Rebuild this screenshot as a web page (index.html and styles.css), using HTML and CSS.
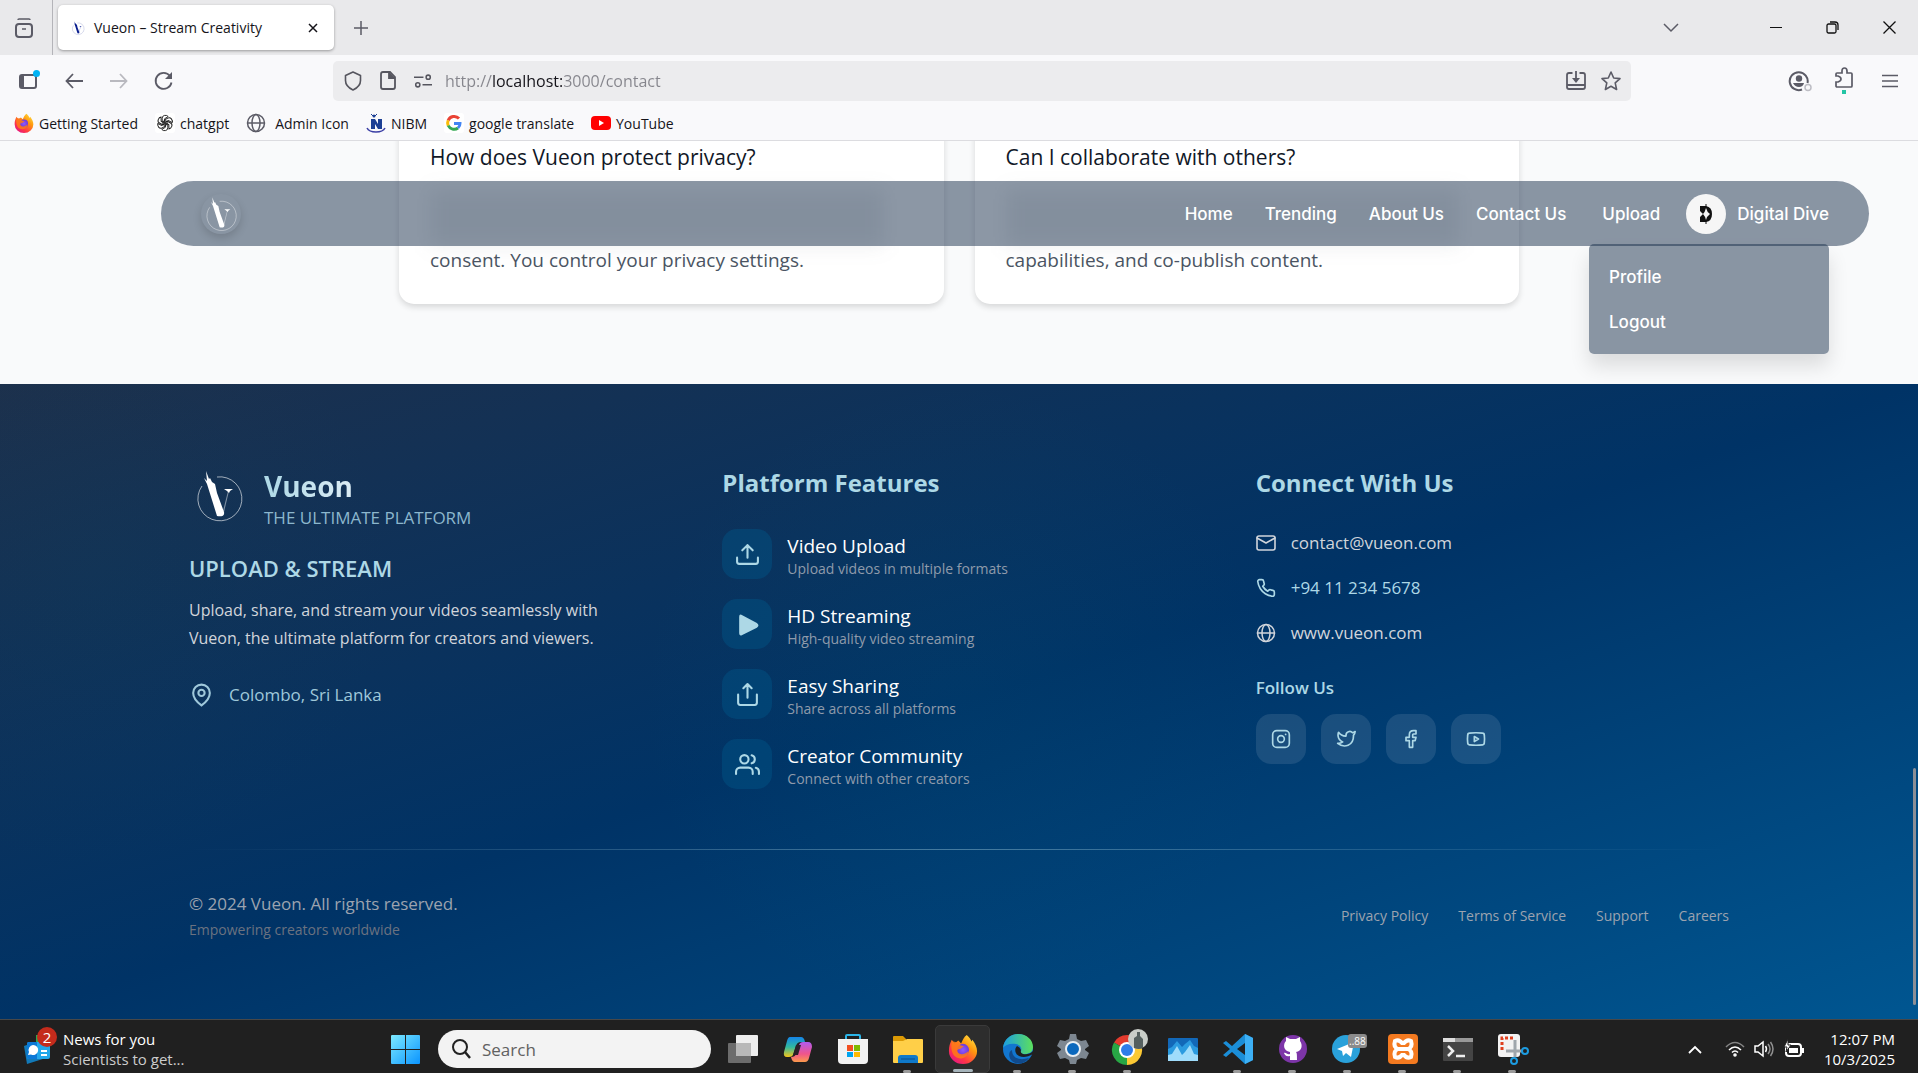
FILE: index.html
```html
<!DOCTYPE html>
<html lang="en">
<head>
<meta charset="utf-8">
<meta name="viewport" content="width=device-width, initial-scale=1">
<title>Vueon – Stream Creativity</title>
<link rel="stylesheet" href="styles.css">
</head>
<body>
<svg class="sprite" aria-hidden="true">
  <symbol id="logo" viewBox="0 0 60 60">
    <path d="M28 11a22 22 0 1 1-15 9" fill="none" stroke="currentColor" stroke-width="1" opacity=".6"/>
    <path d="M17 5l3 8 1-1 2 4 3 2 2 9 7 19c1 4-3 5-7 4L18 18l-3-6 3 3z" fill="currentColor"/>
    <path d="M40 25l-5 21-1-1 5-20z" fill="currentColor" opacity=".45"/>
    <path d="M35 23h9l-3 2-1 2-2-2z" fill="currentColor"/>
  </symbol>
  <symbol id="firefox" viewBox="0 0 32 32">
    <defs>
      <linearGradient id="ffa" x1="1" y1="0" x2=".2" y2="1"><stop offset="0" stop-color="#fff44f"/><stop offset=".4" stop-color="#ff980e"/><stop offset=".75" stop-color="#ff3647"/><stop offset="1" stop-color="#e31587"/></linearGradient>
      <radialGradient id="ffb"><stop offset="0" stop-color="#9059ff"/><stop offset="1" stop-color="#6e3ad6"/></radialGradient>
    </defs>
    <path d="M20 1c3 3 4 4 5 7l1-2c3 4 5 8 5 12a15 14 0 0 1-30 0c0-5 1-8 3-12l3 4 4-3 3 3c2-4 3-7 6-9z" fill="url(#ffa)"/>
    <circle cx="16" cy="17" r="6.500" fill="url(#ffb)"/>
    <path d="M4 8c4 0 8 1 9 4l4 1-4 3c-3 0-4 2-2 4 3 3 8 1 11-2-1 6-5 8-9 8-6 0-11-6-9-18z" fill="#ff7a18" opacity=".85"/>
  </symbol>
  <symbol id="globe" viewBox="0 0 20 20">
    <g fill="none" stroke="currentColor" stroke-width="1.5"><circle cx="10" cy="10" r="8.5"/><ellipse cx="10" cy="10" rx="4" ry="8.5"/><path d="M1.5 10h17"/></g>
  </symbol>
</svg>

<header class="chrome">
  <div class="tabstrip">
    <button class="icon-btn recent" aria-label="Recent tabs"><svg width="20" height="22" viewBox="0 0 20 22" fill="none" stroke="currentColor" stroke-width="2"><rect x="2" y="7" width="16" height="13" rx="3"/><path d="M4 3q0-1 1-1h10q1 0 1 1M8 12h4" stroke-width="1.5"/></svg></button>
    <div class="tab">
      <svg class="favicon" width="16" height="16"><use href="#logo"/></svg>
      <span class="tab-title">Vueon – Stream Creativity</span>
      <button class="tab-close" aria-label="Close tab"><svg width="10" height="10" viewBox="0 0 10 10" stroke="currentColor" stroke-width="1.5"><path d="M1 1l8 8M9 1l-8 8"/></svg></button>
    </div>
    <button class="icon-btn newtab" aria-label="New tab"><svg width="16" height="16" viewBox="0 0 16 16" stroke="currentColor" stroke-width="1.5"><path d="M8 1v14M1 8h14"/></svg></button>
    <div class="window-controls">
      <button class="icon-btn alltabs" aria-label="List all tabs"><svg width="16" height="10" viewBox="0 0 16 10" fill="none" stroke="currentColor" stroke-width="1.5"><path d="M1 1l7 7 7-7"/></svg></button>
      <button class="icon-btn win" aria-label="Minimize"><svg width="12" height="12" viewBox="0 0 12 12" stroke="currentColor"><path d="M0 5.5h12"/></svg></button>
      <button class="icon-btn win" aria-label="Restore"><svg width="13" height="13" viewBox="0 0 13 13" fill="none" stroke="currentColor" stroke-width="1.3"><rect x="1" y="3" width="9" height="9" rx="1.5"/><path d="M4 1h5q3 0 3 3v5"/></svg></button>
      <button class="icon-btn win" aria-label="Close"><svg width="13" height="13" viewBox="0 0 13 13" stroke="currentColor" stroke-width="1.3"><path d="M.5.5l12 12M12.500.5l-12 12"/></svg></button>
    </div>
  </div>

  <div class="toolbar">
    <div class="nav-buttons">
      <button class="icon-btn sidebar-btn" aria-label="Sidebar"><svg width="22" height="22" viewBox="0 0 22 22"><rect x="2" y="5" width="16" height="13" rx="2" fill="none" stroke="currentColor" stroke-width="2"/><path d="M2 5h4v13H2z" fill="currentColor"/><circle cx="18.500" cy="3.500" r="3.500" fill="#00b3f4"/></svg></button>
      <button class="icon-btn" aria-label="Back"><svg width="18" height="16" viewBox="0 0 18 16" fill="none" stroke="currentColor" stroke-width="1.8"><path d="M18 8H2M8 1L1.500 8 8 15"/></svg></button>
      <button class="icon-btn dim" aria-label="Forward"><svg width="18" height="16" viewBox="0 0 18 16" fill="none" stroke="currentColor" stroke-width="1.8"><path d="M0 8h16M10 1l6.500 7-6.500 7"/></svg></button>
      <button class="icon-btn" aria-label="Reload"><svg width="20" height="20" viewBox="0 0 20 20" fill="none" stroke="currentColor" stroke-width="1.8"><path d="M17.500 11.500A8 8 0 1 1 16 5"/><path d="M18 1v7h-7z" fill="currentColor" stroke="none"/></svg></button>
    </div>
    <div class="urlbar">
      <svg width="18" height="20" viewBox="0 0 18 20" fill="none" stroke="currentColor" stroke-width="1.6"><path d="M9 1l7.500 3.500v5q0 6-7.500 9.500-7.500-3.500-7.500-9.500v-5z" stroke-linejoin="round"/></svg>
      <svg width="16" height="19" viewBox="0 0 16 19" fill="none" stroke="currentColor" stroke-width="1.8"><path d="M3 1h7l5 5v10q0 2-2 2H3q-2 0-2-2V3q0-2 2-2z"/><path d="M9 1v6h6" fill="currentColor"/></svg>
      <svg width="19" height="14" viewBox="0 0 19 14" fill="none" stroke="currentColor" stroke-width="1.6"><path d="M0 3h10M9 11h10"/><circle cx="15" cy="3" r="2.200"/><circle cx="4" cy="11" r="2.200"/></svg>
      <input class="url" type="text" value="http://localhost:3000/contact" aria-label="Address">
      <button class="icon-btn url-act" aria-label="Install"><svg width="20" height="20" viewBox="0 0 20 20" fill="none" stroke="currentColor" stroke-width="1.8"><path d="M6.500 2H3Q1 2 1 4v12q0 2 2 2h14q2 0 2-2V4q0-2-2-2h-3.500M1 14h18M10 0v9"/><path d="M6 7h8l-4 5z" fill="currentColor" stroke="none"/></svg></button>
      <button class="icon-btn url-act" aria-label="Bookmark"><svg width="20" height="20" viewBox="0 0 20 20" fill="none" stroke="currentColor" stroke-width="1.6" stroke-linejoin="round"><path d="M10 1l2.700 6 6.300.6-4.800 4.300 1.400 6.600L10 15.200l-5.600 3.300 1.400-6.600L1 7.600 7.300 7z"/></svg></button>
    </div>
    <div class="ext-buttons">
      <button class="icon-btn" aria-label="Account"><svg width="24" height="22" viewBox="0 0 24 22"><path d="M19.500 13A9 9 0 1 0 14 19.500" fill="none" stroke="currentColor" stroke-width="2"/><circle cx="11" cy="8.500" r="3.200" fill="currentColor"/><path d="M5 13h11q-1 4-5 4t-6-4z" fill="currentColor"/><circle cx="20" cy="17.500" r="3" fill="none" stroke="#bdbdc4" stroke-width="1.500"/></svg></button>
      <button class="icon-btn" aria-label="Extensions"><svg width="20" height="28" viewBox="0 0 20 28"><path d="M2 20q-1 0-1-1v-4h2q3-1 3-3t-3-3H1V7q0-1 1-1h5V4q0-3 2.500-3T12 4v2h4q1 0 1 1v12q0 1-1 1z" fill="none" stroke="currentColor" stroke-width="1.700"/><path d="M7 23h4v4H7z" fill="#24c5a5"/></svg></button>
      <button class="icon-btn" aria-label="Menu"><svg width="16" height="14" viewBox="0 0 16 14" stroke="currentColor" stroke-width="1.500"><path d="M0 1.500h16M0 7h16M0 12.500h16"/></svg></button>
    </div>
  </div>

  <nav class="bookmarks" aria-label="Bookmarks">
    <a href="#"><svg width="20" height="20"><use href="#firefox"/></svg>Getting Started</a>
    <a href="#"><svg width="20" height="20" viewBox="0 0 20 20"><rect width="20" height="20" rx="3" fill="#fff"/><g fill="none" stroke="#222" stroke-width="1.200" transform="translate(2 2) scale(.8)"><path id="petal" d="M10 7L6.500 9V4q0-3 3-3.500 3-.5 4.500 1.500L9.500 4.700V10"/><use href="#petal" transform="rotate(60 10 10)"/><use href="#petal" transform="rotate(120 10 10)"/><use href="#petal" transform="rotate(180 10 10)"/><use href="#petal" transform="rotate(240 10 10)"/><use href="#petal" transform="rotate(300 10 10)"/></g></svg>chatgpt</a>
    <a href="#" class="wide"><svg width="20" height="20" class="grey"><use href="#globe"/></svg>Admin Icon</a>
    <a href="#"><svg width="20" height="20" viewBox="0 0 20 20"><path d="M5 16V6h4l3 5V6h4v10h-4l-3-5v5z" fill="#1c3f94"/><circle cx="8" cy="3" r="1.500" fill="#1c3f94"/><path d="M5 1l3 3 3-3" fill="none" stroke="#1c3f94"/><path d="M1 15q2 4 9 4t9-4" fill="none" stroke="#3b3fa5" stroke-width="1.500"/></svg>NIBM</a>
    <a href="#"><svg width="20" height="20" viewBox="0 0 20 20" fill="none" stroke-width="3"><rect width="20" height="20" rx="3" fill="#fff"/><path d="M15 5.500A6.500 6.500 0 0 0 4.200 7.500" stroke="#ea4335"/><path d="M4.200 7.300a6.500 6.500 0 0 0 0 5.400" stroke="#fbbc05"/><path d="M4.200 12.500A6.500 6.500 0 0 0 14 15" stroke="#34a853"/><path d="M14 15a6 6 0 0 0 2-4.600h-6" stroke="#4285f4"/></svg>google translate</a>
    <a href="#"><svg width="20" height="20" viewBox="0 0 20 20"><rect y="3" width="20" height="14" rx="4" fill="#f00"/><path d="M8 7l5 3-5 3z" fill="#fff"/></svg>YouTube</a>
  </nav>
</header>

<main class="page">
  <nav class="site-nav">
    <a class="nav-logo" href="#" aria-label="Vueon"><svg width="40" height="40"><use href="#logo"/></svg></a>
    <div class="nav-links">
      <a href="#">Home</a><a href="#">Trending</a><a href="#">About Us</a><a href="#">Contact Us</a>
    </div>
    <a class="upload" href="#">Upload</a>
    <button class="account">
      <span class="avatar"><svg width="14" height="20" viewBox="0 0 14 20"><path fill-rule="evenodd" d="M1 2h6q6 1 6 8t-6 8H1v-5l3-3-3-3zm6 2q-1 4-3 6 2 2 3 6 1-4 4-6-3-2-4-6z" fill="#111"/><path d="M7 0v4M7 16v4" stroke="#111"/></svg></span>
      Digital Dive
    </button>
  </nav>
  <div class="dropdown">
    <a href="#">Profile</a>
    <button>Logout</button>
  </div>

  <section class="faq">
    <article class="card">
      <h3>How does Vueon protect privacy?</h3>
      <div class="veil"></div>
      <p>consent. You control your privacy settings.</p>
    </article>
    <article class="card">
      <h3>Can I collaborate with others?</h3>
      <div class="veil"></div>
      <p>capabilities, and co-publish content.</p>
    </article>
  </section>

  <footer class="footer">
    <div class="footer-grid">
      <section>
        <div class="brand">
          <svg width="60" height="60"><use href="#logo"/></svg>
          <div><h2>Vueon</h2><p>THE ULTIMATE PLATFORM</p></div>
        </div>
        <h3 class="slogan">UPLOAD &amp; STREAM</h3>
        <p class="about">Upload, share, and stream your videos seamlessly with<br>Vueon, the ultimate platform for creators and viewers.</p>
        <p class="location"><svg width="25" height="26" viewBox="0 0 24 24" fill="none" stroke="currentColor" stroke-width="2"><path d="M12 22q-8-6-8-12a8 8 0 0 1 16 0q0 6-8 12z"/><circle cx="12" cy="10" r="3"/></svg>Colombo, Sri Lanka</p>
      </section>

      <section>
        <h3 class="col-title">Platform Features</h3>
        <ul class="features">
          <li><span class="tile"><svg width="25" height="25" viewBox="0 0 24 24"><path d="M2 15v4q0 2 2 2h16q2 0 2-2v-4M12 15V3M7 8l5-5 5 5"/></svg></span><div><h4>Video Upload</h4><p>Upload videos in multiple formats</p></div></li>
          <li><span class="tile"><svg width="25" height="25" viewBox="0 0 24 24"><path d="M4 4.500v16q0 3 3 1.500l14-7q3-2 0-4.500L7 3Q4 1.500 4 4.500z" class="solid"/></svg></span><div><h4>HD Streaming</h4><p>High-quality video streaming</p></div></li>
          <li><span class="tile"><svg width="25" height="25" viewBox="0 0 24 24"><path d="M3 12v8q0 2 2 2h14q2 0 2-2v-8M12 15V2M8 6l4-4 4 4"/></svg></span><div><h4>Easy Sharing</h4><p>Share across all platforms</p></div></li>
          <li><span class="tile"><svg width="25" height="25" viewBox="0 0 24 24"><path d="M17 21v-2a4 4 0 0 0-4-4H5a4 4 0 0 0-4 4v2M23 21v-2a4 4 0 0 0-3-3.870M16 3.130a4 4 0 0 1 0 7.750"/><circle cx="9" cy="7" r="4"/></svg></span><div><h4>Creator Community</h4><p>Connect with other creators</p></div></li>
        </ul>
      </section>

      <section>
        <h3 class="col-title">Connect With Us</h3>
        <ul class="contacts">
          <li><a href="#"><svg width="20" height="20" viewBox="0 0 20 20"><rect x="1" y="3" width="18" height="14" rx="2"/><path d="M1 5l9 5 9-5"/></svg>contact@vueon.com</a></li>
          <li class="tint"><svg width="20" height="20" viewBox="0 0 24 24"><path stroke-width="2" d="M22 16.920v3a2 2 0 0 1-2.180 2 19.800 19.800 0 0 1-8.630-3.070 19.500 19.500 0 0 1-6-6 19.800 19.800 0 0 1-3.070-8.670A2 2 0 0 1 4.110 2h3a2 2 0 0 1 2 1.720c.13.960.36 1.900.7 2.810a2 2 0 0 1-.45 2.110L8.090 9.910a16 16 0 0 0 6 6l1.270-1.270a2 2 0 0 1 2.110-.45c.91.340 1.850.57 2.810.7A2 2 0 0 1 22 16.920z"/></svg>+94 11 234 5678</li>
          <li><a href="#"><svg width="20" height="20"><use href="#globe"/></svg>www.vueon.com</a></li>
        </ul>
        <h4 class="follow">Follow Us</h4>
        <div class="socials">
          <a href="#" aria-label="Instagram"><svg width="20" height="20" viewBox="0 0 24 24"><rect x="2" y="2" width="20" height="20" rx="5"/><circle cx="12" cy="12" r="4"/><path d="M17.500 6.500h.1"/></svg></a>
          <a href="#" aria-label="Twitter"><svg width="20" height="20" viewBox="0 0 24 24"><path d="M23 3a10.900 10.900 0 0 1-3.140 1.530 4.480 4.480 0 0 0-7.860 3v1A10.660 10.660 0 0 1 3 4s-3 8 5 11.500c-2 1.700-4 2-6 1.800C10 23.500 21 20 21 8.500a4.500 4.500 0 0 0-.08-.83A7.720 7.720 0 0 0 23 3z"/></svg></a>
          <a href="#" aria-label="Facebook"><svg width="20" height="20" viewBox="0 0 24 24"><path d="M18 2h-3q-5 0-5 5v3H6v4h4v8h4v-8h3l1-4h-4V7q0-1 1-1h3z"/></svg></a>
          <a href="#" aria-label="YouTube"><svg width="20" height="20" viewBox="0 0 24 24"><path d="M4 5q8-1 16 0 2 0 2 3 .5 4 0 8 0 3-2 3-8 1-16 0-2 0-2-3-.5-4 0-8 0-3 2-3z"/><path d="M10 9l5 3-5 3z"/></svg></a>
        </div>
      </section>
    </div>
    <hr>
    <div class="footer-bottom">
      <div><p class="copy">© 2024 Vueon. All rights reserved.</p><p class="tagline">Empowering creators worldwide</p></div>
      <nav class="legal"><a href="#">Privacy Policy</a><a href="#">Terms of Service</a><a href="#">Support</a><a href="#">Careers</a></nav>
    </div>
  </footer>
  <div class="scroll-thumb"></div>
</main>

<div class="taskbar">
  <button class="widget">
    <span class="news-icon"><svg width="28" height="32" viewBox="0 0 28 32"><path d="M12 2h10v12H12z" fill="#2fa84f"/><path d="M3 31l-3-18 8-3 14 15z" fill="#1279b8"/><rect x="3" y="9" width="23" height="17" rx="2" fill="#22a7ea"/><path d="M3 11q0-2 2-2h8v17H5q-2 0-2-2z" fill="#0a78d6"/><path d="M9 12a5 5 0 1 1-2 9.500L4 22l1-3a5 5 0 0 1 4-7z" fill="#fff"/><path d="M17 18h6M17 22h6" stroke="#fff" stroke-width="2"/></svg><span class="badge">2</span></span>
    <span class="news"><b>News for you</b><span>Scientists to get...</span></span>
  </button>

  <div class="apps">
    <button class="start" aria-label="Start"><svg width="29" height="29" viewBox="0 0 29 29"><defs><linearGradient id="wn" gradientUnits="userSpaceOnUse" x1="0" y1="0" x2="29" y2="29"><stop offset="0" stop-color="#7deaff"/><stop offset="1" stop-color="#0a94ff"/></linearGradient></defs><path d="M0 1q0-1 1-1h13v14H0zM15 0h13q1 0 1 1v13H15zM0 15h14v14H1q-1 0-1-1zM15 15h14v13q0 1-1 1H15z" fill="url(#wn)"/></svg></button>
    <label class="search"><svg width="20" height="20" viewBox="0 0 20 20" fill="none" stroke="#222" stroke-width="2"><circle cx="9" cy="8" r="7"/><path d="M14 13l5 6" stroke-width="2.500"/></svg><input type="search" placeholder="Search" aria-label="Search"></label>
    <div class="slots">
      <button aria-label="Task view"><svg width="32" height="32" viewBox="0 0 32 32"><rect x="9" y="2" width="22" height="21" rx="1" fill="#eee"/><rect x="1" y="10" width="23" height="20" rx="1" fill="#6c6c6c"/><path d="M9 10h15v13H9z" fill="#b8b8b8"/></svg></button>
      <button aria-label="Copilot"><svg width="32" height="32" viewBox="0 0 32 32"><defs><linearGradient id="cpa" x1="0" y1="0" x2="0" y2="1"><stop offset="0" stop-color="#1584e8"/><stop offset=".5" stop-color="#30b9a0"/><stop offset="1" stop-color="#f5c518"/></linearGradient><linearGradient id="cpb" x1="0" y1="0" x2="0" y2="1"><stop offset="0" stop-color="#b15bf0"/><stop offset=".6" stop-color="#f0558a"/><stop offset="1" stop-color="#fb9a4b"/></linearGradient></defs><path d="M8 4h11q3 0 4 5h-4q-4 0-5 4l-3 9q-1 2-4 2H5q-4 0-3-5l3-11q1-4 3-4z" fill="url(#cpa)"/><path d="M23 29H13q-3 0-4-5 4 0 5-3l3-9q1-3 4-3h5q4 0 4 5l-3 11q-1 4-4 4z" fill="url(#cpb)"/><path d="M14 12h5l-3 10h-5z" fill="#2a2028"/></svg></button>
      <button aria-label="Store"><svg width="32" height="32" viewBox="0 0 32 32"><path d="M9 9V3q0-1 1-1h12q1 0 1 1v6" fill="none" stroke="#2bb5e8" stroke-width="2"/><path d="M1 6h30v21q0 4-4 4H5q-4 0-4-4z" fill="#f2f2f2"/><path d="M10 12h6v6h-6z" fill="#f25022"/><path d="M17 12h6v6h-6z" fill="#7fba00"/><path d="M10 19h6v5h-6z" fill="#00a4ef"/><path d="M17 19h6v5h-6z" fill="#ffb900"/></svg></button>
      <button class="open" aria-label="File Explorer"><svg width="32" height="32" viewBox="0 0 32 32"><path d="M1 4q0-1 1-1h9l3 3v6H1z" fill="#dc9a05"/><path d="M1 8h10l4-2h15q1 0 1 1v22q0 1-1 1H2q-1 0-1-1z" fill="#ffcf48"/><path d="M6 30v-5q0-3 3-3h14q3 0 3 3v5z" fill="#0f79c9"/><path d="M9 26h14" stroke="#0a4f8a"/></svg></button>
      <button class="open active" aria-label="Firefox"><svg width="30" height="30"><use href="#firefox"/></svg></button>
      <button class="open" aria-label="Edge"><svg width="32" height="32" viewBox="0 0 32 32"><defs><linearGradient id="eg" x1="0" x2="1"><stop offset="0" stop-color="#1b9de2"/><stop offset="1" stop-color="#5de05c"/></linearGradient></defs><circle cx="16" cy="16" r="15" fill="#1276cf"/><path d="M1 15C2 6 9 1 16 1c9 0 15 6 15 13 0 5-4 7-8 7-4 0-5-1-4-3s0-6-5-7C8 10 3 12 1 15z" fill="url(#eg)"/><path d="M10 17c0 8 7 11 17 8-4 6-13 8-18 2-3-4-2-9 1-10z" fill="#114a8b"/><path d="M15 13c-3 3-2 8 2 10 4 2 9 1 14-2V18q-4 4-10 3-3-1-2-4-1-3-4-4z" fill="#202020"/></svg></button>
      <button class="open" aria-label="Settings"><svg width="32" height="32" viewBox="0 0 32 32"><path d="M13 1h6l1 5 4 2 5-1 3 6-4 3v1l4 3-3 6-5-1-4 2-1 4h-6l-1-4-4-2-5 1-3-6 4-3v-1l-4-3 3-6 5 1 4-2z" fill="#7d8791"/><circle cx="16" cy="16" r="7" fill="#0b68bd" stroke="#e9eef2" stroke-width="2"/></svg></button>
      <button class="open" aria-label="Chrome"><svg width="40" height="40" viewBox="0 0 40 40"><path d="M19 21L6 13.500A15 15 0 0 1 32 13.500z" fill="#e33b2e"/><path d="M19 21v15A15 15 0 0 1 6 13.500z" fill="#28a745"/><path d="M19 21l13-7.500A15 15 0 0 1 19 36z" fill="#fcc934"/><circle cx="19" cy="21" r="8" fill="#fff"/><circle cx="19" cy="21" r="6" fill="#2f7de9"/><circle cx="30" cy="10" r="10" fill="#c9cdc8"/><path d="M26 19V9l3-2V3h3v4l3 3v9q-4 2-9 0z" fill="#55605f"/></svg></button>
      <button aria-label="Task Manager"><svg width="32" height="32" viewBox="0 0 32 32"><rect x="1" y="5" width="30" height="23" rx="1" fill="#1268b8"/><path d="M1 16l4-2 5-6 5 6 3-3 5-4 4 6 4 2v7H1z" fill="#2b9be0"/><path d="M1 22l4-1 5-8 5 9 3-3 5-7 4 9 4 1v6H1z" fill="#9fdcfb"/></svg></button>
      <button class="open" aria-label="VS Code"><svg width="32" height="32" viewBox="0 0 32 32"><path d="M23 1l8 4v22l-8 4-13-12-6 5-3-2 7-6-7-6 3-2 6 5zM23 10l-8 6 8 6z" fill="#1b8ed8" fill-rule="evenodd"/><path d="M23 1l8 4v22l-8 4z" fill="#3db0f5"/></svg></button>
      <button class="open" aria-label="GitHub"><svg width="32" height="32" viewBox="0 0 32 32"><circle cx="16" cy="16" r="14" fill="#7d35a8"/><path d="M13 27v-4c-4 1-5-1-6-3 2-1 3 2 6 1v-2c-7-1-7-8-4-11V4l4 2h6l4-2v4c3 4 2 10-4 11 1 1 1 3 1 8z" fill="#fff"/></svg></button>
      <button class="open" aria-label="Telegram"><svg width="40" height="32" viewBox="0 0 40 32"><circle cx="18" cy="16" r="14" fill="#2aa1da"/><path d="M9 16l17-7-3 15-5-4-3 3-1-5z" fill="#fff"/><rect x="20" y="1" width="19" height="14" rx="3" fill="#8b8b8b"/><text x="21" y="12" font-size="10" fill="#fff" font-family="Open Sans, sans-serif">..88</text></svg></button>
      <button class="open" aria-label="XAMPP"><svg width="32" height="32" viewBox="0 0 32 32"><rect x="1" y="1" width="30" height="30" rx="4" fill="#f47a20"/><path d="M8 8q-2 6 3 8-5 2-3 8 4 2 7-2h2q3 4 7 2 2-6-3-8 5-2 3-8-4-2-7 2h-2q-3-4-7-2z" fill="none" stroke="#fff" stroke-width="4"/><path d="M10 16h12" stroke="#fff" stroke-width="4"/></svg></button>
      <button class="open" aria-label="Terminal"><svg width="32" height="32" viewBox="0 0 32 32"><rect x="1" y="5" width="30" height="23" rx="1" fill="#444"/><path d="M1 5h30v4H1z" fill="#999"/><path d="M1 5h12v4H1z" fill="#ddd"/><path d="M6 13l5 5-5 5M14 23h9" fill="none" stroke="#eee" stroke-width="2.500"/></svg></button>
      <button class="open" aria-label="Snipping Tool"><svg width="32" height="32" viewBox="0 0 32 32"><rect x="1" y="1" width="22" height="23" rx="3" fill="#f3f3f3"/><path d="M5 17V5h13" fill="none" stroke="#e0401f" stroke-width="3" stroke-dasharray="3 2"/><path d="M18 7v17M9 18h16" stroke="#9fa6ac" stroke-width="3"/><g fill="none" stroke="#1c9be0" stroke-width="2"><circle cx="28" cy="18" r="3"/><circle cx="17" cy="28" r="3"/></g></svg></button>
    </div>
  </div>

  <div class="tray">
    <svg class="up" width="14" height="9" viewBox="0 0 14 9" fill="none" stroke="#fff" stroke-width="1.800"><path d="M1 8l6-6 6 6"/></svg>
    <svg width="20" height="16" viewBox="0 0 20 16" fill="none" stroke="#fff" stroke-width="1.600"><path d="M1 6q9-9 18 0" opacity=".45"/><path d="M4 9q6-6 12 0M7 11.500q3-3 6 0"/><circle cx="10" cy="14" r="1"/></svg>
    <svg width="20" height="18" viewBox="0 0 20 18" fill="none" stroke="#fff" stroke-width="1.500"><path d="M1 6h3l5-4v14l-5-4H1zM11.500 6q2 3 0 6"/><path d="M14 4q4 5 0 10M16.500 2q5 7 0 14" opacity=".5"/></svg>
    <svg width="22" height="20" viewBox="0 0 22 20"><rect x="3" y="5" width="15" height="12" rx="3" fill="none" stroke="#fff" stroke-width="2"/><path d="M6 9h9v5H6zM19 9h2v5h-2z" fill="#fff"/><path d="M5 0L1 8h3l-1 5 5-7H5z" fill="#fff" stroke="#202020"/></svg>
    <div class="clock"><span>12:07 PM</span><span>10/3/2025</span></div>
  </div>
</div>
</body>
</html>
```
FILE: styles.css
```css
* { box-sizing: border-box; margin: 0; padding: 0; }

body {
  display: flex;
  flex-direction: column;
  height: 100vh;
  overflow: hidden;
  font-family: "Segoe UI", "Open Sans", sans-serif;
  color: #15141a;
  background: #f9fafb;
}

a { color: inherit; text-decoration: none; }
button, input { font: inherit; color: inherit; border: 0; background: none; }
button { cursor: pointer; }
ul { list-style: none; }
svg { display: block; flex: none; }
.sprite { position: absolute; width: 0; height: 0; }

/* Browser chrome */
.chrome { flex: none; background: #f9f9fb; border-bottom: 1px solid #dcdce0; font-size: 14px; }
.icon-btn { display: grid; place-items: center; width: 45px; height: 40px; color: #5b5b66; }

.tabstrip { display: flex; align-items: center; height: 55px; background: #e9e9eb; }
.recent { width: 53px; height: 55px; padding-right: 5px; border-right: 1px solid #b4b4b9; }
.tab {
  display: flex;
  align-items: center;
  gap: 8px;
  width: 276px;
  height: 45px;
  margin: 0 4px 0 5px;
  padding: 0 12px;
  border-radius: 5px;
  background: #fff;
  box-shadow: 0 1px 3px rgba(0, 0, 0, .35);
}
.favicon { color: #0a1f8f; }
.tab-title { flex: 1; white-space: nowrap; }
.tab-close { display: grid; place-items: center; width: 18px; height: 18px; }
.window-controls { display: flex; align-items: center; margin-left: auto; }
.win { width: 57px; color: #111; }
.alltabs { margin-right: 54px; }

.toolbar { display: flex; align-items: center; height: 51px; }
.nav-buttons { display: flex; width: 333px; padding-left: 6px; }
.dim { color: #b9b9bf; }
.urlbar {
  display: flex;
  align-items: center;
  gap: 17px;
  flex: 1;
  height: 40px;
  padding: 0 3px 0 11px;
  border-radius: 5px;
  background: #ececee;
  color: #55555e;
}
.urlbar > svg { width: 18px; }
.url {
  flex: 1;
  min-width: 0;
  height: 30px;
  margin-left: -4px;
  font-size: 16px;
  color: transparent;
  background: linear-gradient(90deg, #85858c 48px, #15141a 48px 118px, #85858c 118px) text;
  outline: 0;
}
.url-act { width: 35px; margin-left: -17px; }
.ext-buttons { display: flex; width: 287px; padding-right: 6px; justify-content: flex-end; }

.bookmarks { display: flex; align-items: center; gap: 17px; height: 34px; padding-left: 14px; }
.bookmarks a { display: flex; align-items: center; gap: 5px; }
.bookmarks .wide { gap: 9px; }
.grey { color: #5b5b66; }

/* Web page: scrolled to its end, so the content sits against the bottom */
.page {
  position: relative;
  display: flex;
  flex-direction: column;
  justify-content: flex-end;
  flex: 1;
  min-height: 0;
  overflow: hidden;
}

.site-nav {
  position: absolute;
  z-index: 2;
  top: 40px;
  left: 161px;
  right: 49px;
  display: flex;
  align-items: center;
  height: 65px;
  padding: 0 40px;
  border-radius: 33px;
  background: rgba(25, 48, 75, .5);
  font: 500 17px/26px Inter, sans-serif;
  color: #fff;
}
.nav-logo {
  display: grid;
  place-items: center;
  width: 40px;
  height: 40px;
  margin-right: auto;
  border-radius: 50%;
  box-shadow: 0 4px 8px rgba(0, 0, 0, .15);
}
.nav-links { display: flex; gap: 32px; }
.upload { margin: 0 26px 0 36px; }
.account { display: flex; align-items: center; gap: 11px; }
.avatar {
  display: grid;
  place-items: center;
  width: 40px;
  height: 40px;
  border-radius: 50%;
  background: #f6f6f6;
}

.dropdown {
  position: absolute;
  z-index: 1;
  top: 103px;
  right: 89px;
  width: 240px;
  padding: 11px 20px 9px;
  border-radius: 5px;
  background: rgba(25, 48, 75, .5);
  box-shadow: 0 12px 20px rgba(0, 0, 0, .12);
  font: 500 17px/45px Inter, sans-serif;
  color: #fff;
}
.dropdown a, .dropdown button { display: block; height: 45px; }

.faq {
  display: grid;
  grid-template-columns: 1fr 1fr;
  gap: 31px;
  width: 100%;
  max-width: 1120px;
  margin: 0 auto;
  padding-bottom: 80px;
}
.card {
  padding: 30px 31px;
  border-radius: 15px;
  background: #fff;
  box-shadow: 0 3px 6px rgba(0, 0, 0, .14);
}
.card h3 { font-size: 21px; font-weight: 400; line-height: 28px; color: #111827; }
.card p { font-size: 19px; line-height: 28px; color: #4b5563; }
.veil {
  width: 94%;
  height: 56px;
  margin-top: 19px;
  background: rgba(75, 85, 99, .1);
  filter: blur(10px);
}

/* Footer */
.footer {
  flex: none;
  padding: 80px 189px 79px;
  background:
    radial-gradient(circle at 50% 50%, rgba(0, 120, 140, .08), transparent 320px),
    radial-gradient(circle at 5% 30%, rgba(0, 100, 110, .06), transparent 300px),
    linear-gradient(to bottom right, #1d304c 0%, #003366 50%, #005691 100%);
  color: #d1d5db;
}
.footer-grid { display: grid; grid-template-columns: repeat(3, 1fr); gap: 60px; }
.brand { display: flex; align-items: center; gap: 15px; color: #fff; }
.brand h2 {
  width: max-content;
  font-size: 28px;
  line-height: 44px;
  color: transparent;
  background: linear-gradient(90deg, #add8e6, #dcecf5) text;
}
.brand p { font-size: 17px; line-height: 20px; color: #8cb7cd; }
.slogan { margin-top: 24px; font-size: 22px; font-weight: 600; line-height: 32px; color: #add8e6; }
.about { margin-top: 12px; font-size: 16px; line-height: 28px; white-space: nowrap; }
.location { display: flex; align-items: center; gap: 15px; margin-top: 30px; font-size: 17px; line-height: 24px; color: #9fc8da; }

.col-title { font-size: 24px; line-height: 38px; color: #add8e6; }
.features { display: grid; gap: 20px; margin-top: 27px; }
.features li { display: flex; align-items: flex-end; gap: 15px; height: 50px; }
.tile {
  display: grid;
  place-items: center;
  width: 50px;
  height: 50px;
  border-radius: 15px;
  background: rgba(0, 90, 140, .4);
}
.tile svg, .socials svg, .contacts svg { fill: none; stroke: currentColor; stroke-width: 2; stroke-linecap: round; stroke-linejoin: round; }
.tile, .socials, .tint { color: #add8e6; }
.tile .solid { fill: currentColor; stroke: none; }
.features h4 { font-size: 19px; font-weight: 400; line-height: 26px; color: #fff; }
.features p { font-size: 14px; line-height: 20px; color: #8f9bab; }

.contacts { display: grid; gap: 20px; margin-top: 28px; font-size: 17px; line-height: 25px; }
.contacts li, .contacts a { display: flex; align-items: center; gap: 15px; }
.contacts svg { stroke-width: 1.6; }
.follow { margin-top: 31px; font-size: 17px; font-weight: 600; line-height: 24px; color: #add8e6; }
.socials { display: flex; gap: 15px; margin-top: 14px; }
.socials a {
  display: grid;
  place-items: center;
  width: 50px;
  height: 50px;
  border-radius: 15px;
  background: rgba(255, 255, 255, .1);
}

.footer hr {
  height: 1px;
  margin: 60px 0 41px;
  border: 0;
  background: linear-gradient(90deg, transparent, rgba(173, 216, 230, .4), transparent);
}
.footer-bottom { display: flex; align-items: center; justify-content: space-between; }
.copy { font-size: 17px; line-height: 26px; color: #9ca3af; }
.tagline { margin-top: 3px; font-size: 14px; line-height: 20px; color: #6b7280; }
.legal { display: flex; gap: 30px; font-size: 14px; color: #9ca3af; }
.scroll-thumb {
  position: absolute;
  right: 2px;
  bottom: 14px;
  width: 3px;
  height: 237px;
  border-radius: 2px;
  background: #8c8f96;
}

/* Taskbar */
.taskbar {
  flex: none;
  display: grid;
  grid-template-columns: 1fr auto 1fr;
  align-items: center;
  height: 54px;
  padding-top: 5px;
  border-top: 1px solid #484848;
  background: #202020;
  color: #fff;
  font-size: 15px;
}
.widget { display: flex; align-items: center; gap: 11px; padding-left: 24px; text-align: left; }
.news-icon { position: relative; }
.badge {
  position: absolute;
  top: -6px;
  right: -5px;
  width: 20px;
  height: 20px;
  border-radius: 50%;
  background: #c42b1c;
  line-height: 20px;
  text-align: center;
}
.news { display: grid; line-height: 20px; }
.news b { font-weight: 400; }
.news span { color: #ccc; }
.apps { display: flex; align-items: center; }
.start { display: grid; place-items: center; width: 55px; height: 48px; }
.search {
  display: flex;
  align-items: center;
  gap: 11px;
  width: 273px;
  height: 38px;
  margin: 0 4px 0 5px;
  padding: 0 13px;
  border-radius: 19px;
  background: #f3f3f3;
}
.search input { min-width: 0; width: 200px; font-size: 17px; color: #222; outline: 0; }
.search input::placeholder { color: #616161; opacity: 1; }
.slots { display: flex; }
.slots button { position: relative; display: grid; place-items: center; width: 55px; height: 48px; }
.slots .open::after {
  content: "";
  position: absolute;
  bottom: 0;
  left: 23px;
  width: 8px;
  height: 3px;
  border-radius: 2px;
  background: #9a9a9a;
}
.slots .active { border: 1px solid #3a3a3a; border-radius: 5px; background: #2d2d2d; }
.slots .active::after { left: 17px; width: 20px; background: #a6b4bb; }
.tray { display: flex; align-items: center; justify-content: flex-end; gap: 9px; padding-right: 23px; }
.tray .up { margin-right: 14px; }
.clock { display: grid; margin-left: 10px; line-height: 20px; text-align: right; }
```
